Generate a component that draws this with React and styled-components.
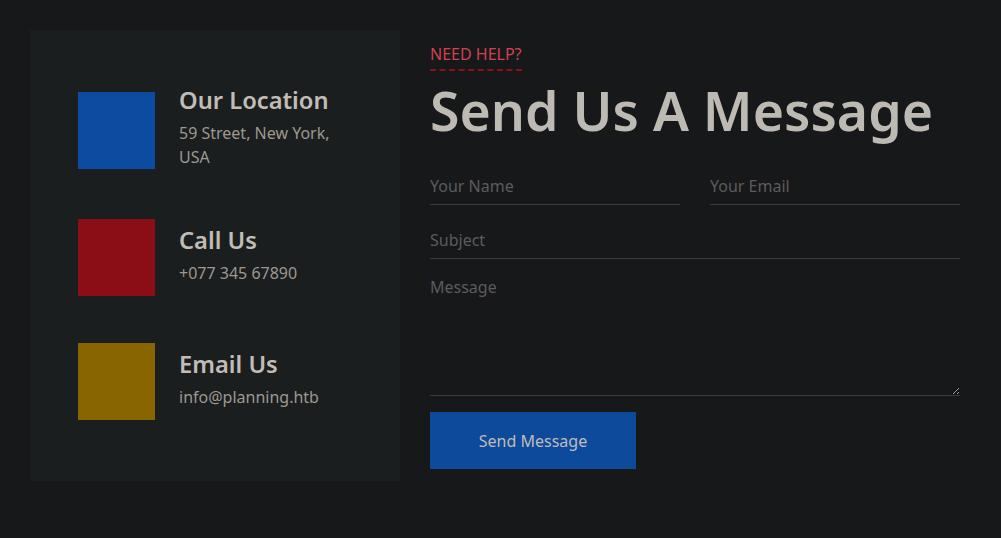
import styled, { createGlobalStyle } from "styled-components";

const GlobalStyle = createGlobalStyle`
  body {
    margin: 0;
    background: #17181a;
    font-family: "Noto Sans", "Open Sans", sans-serif;
  }
  * { box-sizing: border-box; }
`;

const contacts = [
  { title: "Our Location", text: "59 Street, New York, USA", color: "#0d4ba0" },
  { title: "Call Us", text: "+077 345 67890", color: "#8b0e17" },
  { title: "Email Us", text: "info@planning.htb", color: "#886500" },
];

const App = () => {
  return (
    <Page>
      <GlobalStyle />
      <InfoPanel>
        {contacts.map((c) => (
          <InfoItem key={c.title}>
            <Square $color={c.color} />
            <InfoText>
              <h3>{c.title}</h3>
              <p>{c.text}</p>
            </InfoText>
          </InfoItem>
        ))}
      </InfoPanel>
      <FormColumn>
        <Eyebrow>NEED HELP?</Eyebrow>
        <Title>Send Us A Message</Title>
        <Form onSubmit={(e) => e.preventDefault()}>
          <Row>
            <Field type="text" placeholder="Your Name" />
            <Field type="email" placeholder="Your Email" />
          </Row>
          <Field type="text" placeholder="Subject" />
          <Area placeholder="Message" />
          <SendBtn type="submit">Send Message</SendBtn>
        </Form>
      </FormColumn>
    </Page>
  );
};

const Page = styled.div`
  display: flex;
  align-items: flex-start;
  gap: 30px;
  padding: 30px;
`;

const InfoPanel = styled.div`
  width: 370px;
  flex-shrink: 0;
  background: #1b1e1f;
  padding: 55px 48px 61px;
  display: flex;
  flex-direction: column;
  gap: 44px;
`;

const InfoItem = styled.div`
  display: flex;
  align-items: center;
  gap: 24px;
  & + & + & {
    margin-top: 3px;
  }
`;

const Square = styled.div`
  width: 77px;
  height: 77px;
  flex-shrink: 0;
  background: ${(p) => p.$color};
`;

const InfoText = styled.div`
  h3 {
    margin: 0 0 6px;
    font-size: 23.7px;
    line-height: 30px;
    font-weight: 600;
    color: #c1bdb6;
  }
  p {
    margin: 0 0 6px;
    font-size: 16px;
    line-height: 24px;
    color: #9d9890;
  }
`;

const FormColumn = styled.div`
  width: 530px;
  padding-top: 12px;
`;

const Eyebrow = styled.span`
  display: inline-block;
  font-size: 16px;
  line-height: 24px;
  color: #d0424f;
  padding-bottom: 3px;
  border-bottom: 2px dashed #8b0e1a;
`;

const Title = styled.h1`
  margin: 6px 0 23px;
  font-size: 53.6px;
  line-height: 67px;
  font-weight: 600;
  white-space: nowrap;
  color: #bdb9b3;
`;

const Form = styled.form`
  display: flex;
  flex-direction: column;
  gap: 16px;
`;

const Row = styled.div`
  display: grid;
  grid-template-columns: 1fr 1fr;
  gap: 30px;
`;

const Field = styled.input`
  width: 100%;
  height: 38px;
  padding: 0;
  background: transparent;
  border: none;
  border-bottom: 1px solid #3a3b3d;
  font-family: inherit;
  font-size: 16px;
  color: #c1bdb6;
  outline: none;
  &::placeholder {
    color: #5c5c5c;
  }
`;

const Area = styled.textarea`
  width: 100%;
  height: 121px;
  padding: 0;
  background: transparent;
  border: none;
  border-bottom: 1px solid #3a3b3d;
  font-family: inherit;
  font-size: 16px;
  line-height: 24px;
  color: #c1bdb6;
  outline: none;
  &::placeholder {
    color: #5c5c5c;
  }
`;

const SendBtn = styled.button`
  width: 206px;
  height: 57px;
  border: none;
  background: #0d4a9c;
  color: #c0bcb5;
  font-family: inherit;
  font-size: 16px;
  cursor: pointer;
`;

export default App;
